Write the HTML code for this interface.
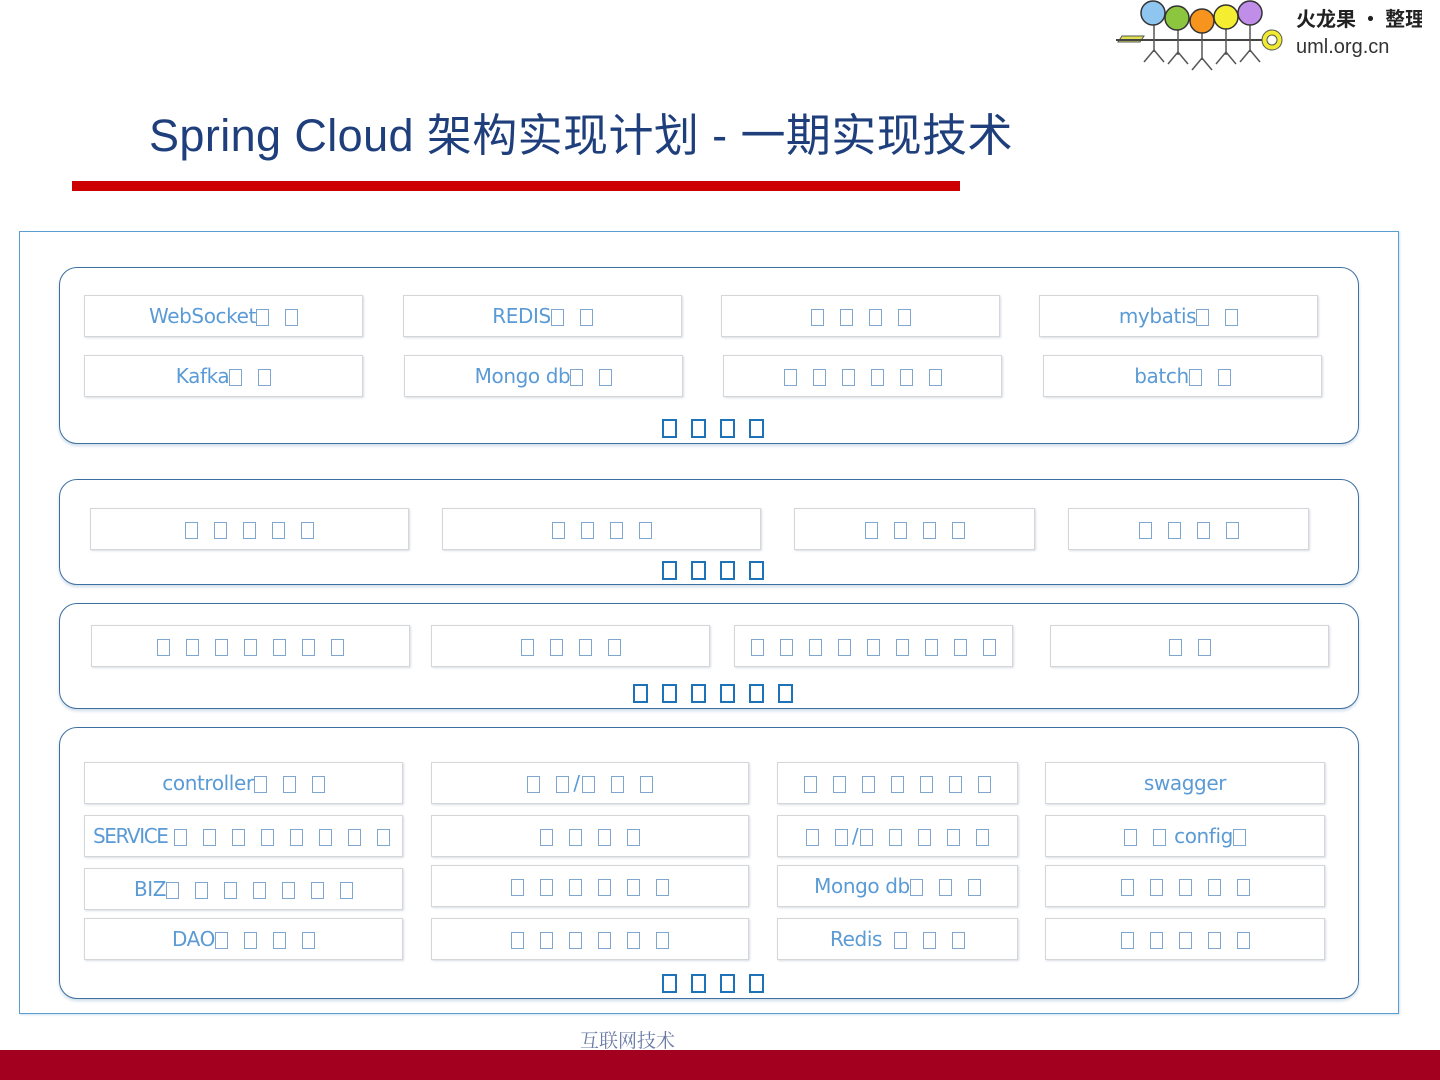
<!DOCTYPE html>
<html><head><meta charset="utf-8"><style>
*{margin:0;padding:0;box-sizing:border-box}
body{width:1440px;height:1080px;background:#fff;position:relative;overflow:hidden;font-family:"Liberation Sans","Noto Sans CJK SC",sans-serif}
.a{position:absolute}
.title{left:149px;top:99px;font-size:45px;color:#1f3f7c;white-space:nowrap;letter-spacing:0.4px}
.red{left:72px;top:181px;width:888px;height:10px;background:#cc0000}
.frame{left:19px;top:231px;width:1380px;height:783px;border:1px solid #5a9fd0;box-shadow:1px 1px 2px #cfe0ee}
.p{position:absolute;left:59px;width:1300px;border:1.5px solid #3d6fa0;border-radius:18px;box-shadow:0 2px 3px #cddbe8}
.b{position:absolute;height:42px;border:1.5px solid #d4d6da;box-shadow:1px 1px 2px #d8dde4;display:flex;align-items:center;justify-content:center;color:#5b9bd5;font-family:"DejaVu Sans",sans-serif;font-size:20px;letter-spacing:-0.4px;white-space:nowrap;background:#fff}
.t{display:inline-block;width:13px;height:17px;border:1.5px solid #7fa6cf;margin-right:16px;vertical-align:middle;position:relative;top:1px}
.t:last-child{margin-right:0}
.l{position:absolute;left:0;width:1440px;text-align:center;height:20px}
.l .t{width:15px;height:19px;border:2px solid #1e72b8;margin-right:14px}
.foot{left:0;top:1050px;width:1440px;height:30px;background:#a3001f}
.ft{left:580px;top:1026px;font-family:"Liberation Serif","Noto Serif CJK SC",serif;font-size:19px;color:#6b7ba6}
</style></head><body>
<svg class="a" style="left:1112px;top:0" width="310" height="72" viewBox="0 0 310 72">
<polygon points="10,36 32,36 28,42 6,42" fill="#e0e050" stroke="#555"/>
<line x1="4" y1="40" x2="150" y2="40" stroke="#444" stroke-width="2"/>
<g stroke="#555" stroke-width="1.5" fill="none">
<line x1="42" y1="25" x2="42" y2="52"/><path d="M32,62 L42,50 L52,62"/>
<line x1="66" y1="28" x2="66" y2="55"/><path d="M56,64 L66,52 L76,64"/>
<line x1="90" y1="32" x2="90" y2="60"/><path d="M80,70 L90,58 L100,70"/>
<line x1="114" y1="28" x2="114" y2="55"/><path d="M104,64 L114,52 L124,64"/>
<line x1="138" y1="25" x2="138" y2="52"/><path d="M128,62 L138,50 L148,62"/>
</g>
<circle cx="41" cy="13" r="12" fill="#8ec6f0" stroke="#333" stroke-width="1.5"/>
<circle cx="65" cy="18" r="12" fill="#8cc63f" stroke="#333" stroke-width="1.5"/>
<circle cx="90" cy="21" r="12" fill="#f7941d" stroke="#333" stroke-width="1.5"/>
<circle cx="114" cy="17" r="12" fill="#f5ee30" stroke="#333" stroke-width="1.5"/>
<circle cx="138" cy="13" r="12" fill="#c08ee8" stroke="#333" stroke-width="1.5"/>
<circle cx="160" cy="40" r="10" fill="#f0ea30" stroke="#555"/><circle cx="160" cy="40" r="5" fill="#fff" stroke="#555"/>
<text x="184" y="26" font-size="20" font-weight="bold" fill="#222" font-family="Noto Sans CJK SC,sans-serif">火龙果 · 整理</text>
<text x="184" y="53" font-size="20" fill="#333" font-family="Liberation Sans,sans-serif">uml.org.cn</text>
</svg>
<div class="a title">Spring Cloud 架构实现计划 - 一期实现技术</div>
<div class="a red"></div>
<div class="a frame"></div>

<div class="p" style="top:267px;height:177px"></div>
<div class="b" style="left:84px;top:295px;width:279px">WebSocket<span class="t"></span><span class="t"></span></div>
<div class="b" style="left:403px;top:295px;width:279px">REDIS<span class="t"></span><span class="t"></span></div>
<div class="b" style="left:721px;top:295px;width:279px"><span class="t"></span><span class="t"></span><span class="t"></span><span class="t"></span></div>
<div class="b" style="left:1039px;top:295px;width:279px">mybatis<span class="t"></span><span class="t"></span></div>
<div class="b" style="left:84px;top:355px;width:279px">Kafka<span class="t"></span><span class="t"></span></div>
<div class="b" style="left:404px;top:355px;width:279px">Mongo db<span class="t"></span><span class="t"></span></div>
<div class="b" style="left:723px;top:355px;width:279px"><span class="t"></span><span class="t"></span><span class="t"></span><span class="t"></span><span class="t"></span><span class="t"></span></div>
<div class="b" style="left:1043px;top:355px;width:279px">batch<span class="t"></span><span class="t"></span></div>
<div class="l" style="top:418px"><span class="t"></span><span class="t"></span><span class="t"></span><span class="t"></span></div>

<div class="p" style="top:479px;height:106px"></div>
<div class="b" style="left:90px;top:508px;width:319px"><span class="t"></span><span class="t"></span><span class="t"></span><span class="t"></span><span class="t"></span></div>
<div class="b" style="left:442px;top:508px;width:319px"><span class="t"></span><span class="t"></span><span class="t"></span><span class="t"></span></div>
<div class="b" style="left:794px;top:508px;width:241px"><span class="t"></span><span class="t"></span><span class="t"></span><span class="t"></span></div>
<div class="b" style="left:1068px;top:508px;width:241px"><span class="t"></span><span class="t"></span><span class="t"></span><span class="t"></span></div>
<div class="l" style="top:560px"><span class="t"></span><span class="t"></span><span class="t"></span><span class="t"></span></div>

<div class="p" style="top:603px;height:106px"></div>
<div class="b" style="left:91px;top:625px;width:319px"><span class="t"></span><span class="t"></span><span class="t"></span><span class="t"></span><span class="t"></span><span class="t"></span><span class="t"></span></div>
<div class="b" style="left:431px;top:625px;width:279px"><span class="t"></span><span class="t"></span><span class="t"></span><span class="t"></span></div>
<div class="b" style="left:734px;top:625px;width:279px"><span class="t"></span><span class="t"></span><span class="t"></span><span class="t"></span><span class="t"></span><span class="t"></span><span class="t"></span><span class="t"></span><span class="t"></span></div>
<div class="b" style="left:1050px;top:625px;width:279px"><span class="t"></span><span class="t"></span></div>
<div class="l" style="top:683px"><span class="t"></span><span class="t"></span><span class="t"></span><span class="t"></span><span class="t"></span><span class="t"></span></div>

<div class="p" style="top:727px;height:272px"></div>
<div class="b" style="left:84px;top:762px;width:319px">controller<span class="t"></span><span class="t"></span><span class="t"></span></div>
<div class="b" style="left:431px;top:762px;width:318px"><span class="t"></span><span class="t" style="margin-right:4px"></span>/<span class="t" style="margin-left:2px"></span><span class="t"></span><span class="t"></span></div>
<div class="b" style="left:777px;top:762px;width:241px"><span class="t"></span><span class="t"></span><span class="t"></span><span class="t"></span><span class="t"></span><span class="t"></span><span class="t"></span></div>
<div class="b" style="left:1045px;top:762px;width:280px">swagger</div>
<div class="b" style="left:84px;top:815px;width:319px;justify-content:flex-start;padding-left:8px;letter-spacing:-1.4px">SERVICE<span class="t" style="margin-left:6px"></span><span class="t"></span><span class="t"></span><span class="t"></span><span class="t"></span><span class="t"></span><span class="t"></span><span class="t"></span></div>
<div class="b" style="left:431px;top:815px;width:318px"><span class="t"></span><span class="t"></span><span class="t"></span><span class="t"></span></div>
<div class="b" style="left:777px;top:815px;width:241px"><span class="t"></span><span class="t" style="margin-right:4px"></span>/<span class="t" style="margin-left:2px"></span><span class="t"></span><span class="t"></span><span class="t"></span><span class="t"></span></div>
<div class="b" style="left:1045px;top:815px;width:280px"><span class="t"></span><span class="t" style="margin-right:8px"></span>config<span class="t"></span></div>
<div class="b" style="left:84px;top:868px;width:319px">BIZ<span class="t"></span><span class="t"></span><span class="t"></span><span class="t"></span><span class="t"></span><span class="t"></span><span class="t"></span></div>
<div class="b" style="left:431px;top:865px;width:318px"><span class="t"></span><span class="t"></span><span class="t"></span><span class="t"></span><span class="t"></span><span class="t"></span></div>
<div class="b" style="left:777px;top:865px;width:241px">Mongo db<span class="t"></span><span class="t"></span><span class="t"></span></div>
<div class="b" style="left:1045px;top:865px;width:280px"><span class="t"></span><span class="t"></span><span class="t"></span><span class="t"></span><span class="t"></span></div>
<div class="b" style="left:84px;top:918px;width:319px">DAO<span class="t"></span><span class="t"></span><span class="t"></span><span class="t"></span></div>
<div class="b" style="left:431px;top:918px;width:318px"><span class="t"></span><span class="t"></span><span class="t"></span><span class="t"></span><span class="t"></span><span class="t"></span></div>
<div class="b" style="left:777px;top:918px;width:241px">Redis&nbsp;&nbsp;<span class="t"></span><span class="t"></span><span class="t"></span></div>
<div class="b" style="left:1045px;top:918px;width:280px"><span class="t"></span><span class="t"></span><span class="t"></span><span class="t"></span><span class="t"></span></div>
<div class="l" style="top:973px"><span class="t"></span><span class="t"></span><span class="t"></span><span class="t"></span></div>

<div class="a ft">互联网技术</div>
<div class="a foot"></div>
</body></html>
